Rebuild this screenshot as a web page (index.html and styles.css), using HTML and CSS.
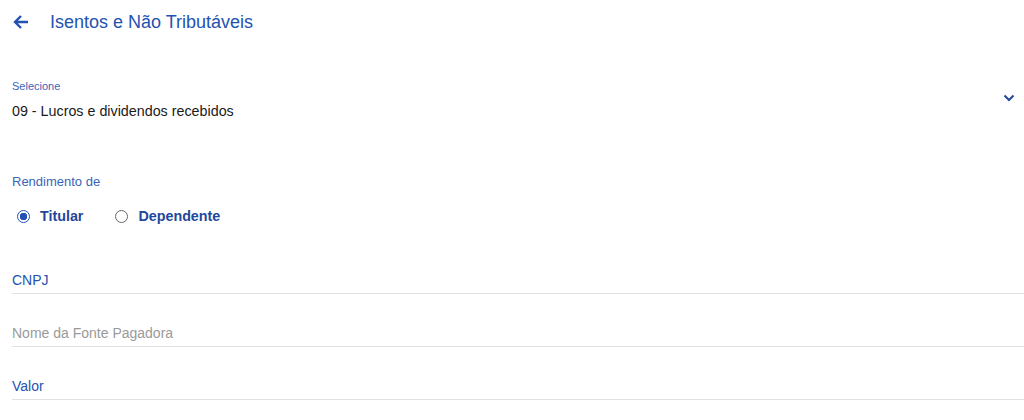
FILE: index.html
```html
<!DOCTYPE html>
<html lang="pt-BR">

<head>
  <meta charset="UTF-8">
  <meta name="viewport" content="width=device-width, initial-scale=1.0">
  <title>Isentos e Não Tributáveis</title>
  <link rel="stylesheet" href="styles.css">
</head>

<body>
  <div class="header">
    <svg class="back" width="16" height="16" viewBox="0 0 16 16">
      <path d="M15 8H2.5M8 2L2 8l6 6" fill="none" stroke="currentColor" stroke-width="2.4" />
    </svg>
    <h1>Isentos e Não Tributáveis</h1>
  </div>
  <main>
    <div class="select">
      <div class="select-text">
        <label>Selecione</label>
        <div class="value">09 - Lucros e dividendos recebidos</div>
      </div>
      <svg class="chevron" width="12" height="8" viewBox="0 0 12 8">
        <path d="M1.5 1.5L6 6l4.5-4.5" fill="none" stroke="currentColor" stroke-width="2" />
      </svg>
    </div>

    <div class="group">
      <div class="group-label">Rendimento de</div>
      <div class="radios">
        <div class="radio checked"><span class="dot"></span>Titular</div>
        <div class="radio"><span class="dot"></span>Dependente</div>
      </div>
    </div>

    <div class="field blue">CNPJ</div>
    <div class="field">Nome da Fonte Pagadora</div>
    <div class="field blue">Valor</div>
  </main>
</body>

</html>
```

FILE: styles.css
```css
:root {
  --blue: #2452b0;
  --light-blue: #3b64b8;
  --dark-blue: #23479a;
  --line: #e2e2e2;
  --gray: #9a9a9a;
}

body {
  margin: 0;
  background: #fff;
  font-family: 'Liberation Sans', Arial, sans-serif;
  color: #222;
}

.header {
  display: flex;
  align-items: center;
  height: 44px;
  padding-left: 13px;
}

.back {
  color: var(--blue);
}

h1 {
  margin: 0 0 0 21px;
  font-size: 18px;
  font-weight: 400;
  color: var(--blue);
}

main {
  padding: 0 0 0 12px;
}

.select {
  display: flex;
  align-items: center;
  justify-content: space-between;
  padding: 36px 9px 0 0;
}

.select label {
  display: block;
  font-size: 11px;
  color: var(--light-blue);
}

.select .value {
  margin-top: 11px;
  font-size: 14.3px;
  color: #1a1a1a;
}

.chevron {
  color: var(--dark-blue);
  margin-bottom: 4px;
}

.group {
  padding-top: 55px;
}

.group-label {
  font-size: 13px;
  color: var(--light-blue);
}

.radios {
  display: flex;
  gap: 32px;
  margin-top: 19px;
  padding-left: 5px;
}

.radio {
  display: flex;
  align-items: center;
  gap: 10px;
  font-size: 14.3px;
  font-weight: 700;
  color: var(--dark-blue);
}

.dot {
  width: 11px;
  height: 11px;
  border: 1.5px solid #666;
  border-radius: 50%;
  box-sizing: content-box;
}

.radio.checked .dot {
  border-color: var(--blue);
  background: radial-gradient(circle, var(--blue) 0 3.5px, #fff 4px);
}

.field {
  height: 38px;
  display: flex;
  align-items: flex-end;
  padding-bottom: 5px;
  border-bottom: 1px solid var(--line);
  box-sizing: border-box;
  margin-top: 15px;
  font-size: 14px;
  color: var(--gray);
}

.group + .field {
  margin-top: 32px;
}

.field.blue {
  color: var(--blue);
}
```
